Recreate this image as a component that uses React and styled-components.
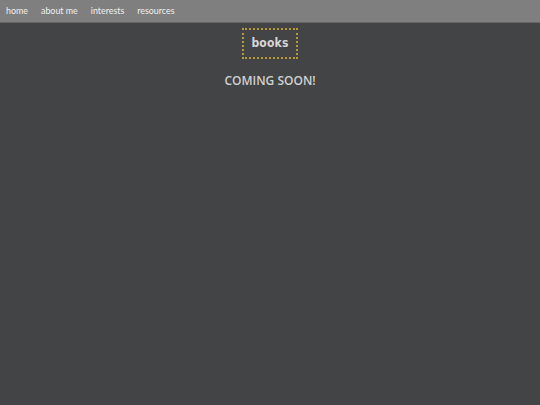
import React from "react";
import styled, { createGlobalStyle } from "styled-components";

const GlobalStyle = createGlobalStyle`
  html, body {
    margin: 0;
    height: 100%;
    background: #434445;
    font-family: "Lato", "Liberation Sans", sans-serif;
  }
`;

const Page = styled.div`
  min-height: 405px;
  display: flex;
  flex-direction: column;
  align-items: center;
`;

const Nav = styled.nav`
  align-self: stretch;
  height: 23px;
  box-sizing: border-box;
  padding: 0 6px 1px;
  display: flex;
  align-items: center;
  gap: 13px;
  background: #7f7f7f;
  border-bottom: 1px solid #666;
`;

const NavLink = styled.a`
  color: #f0f0f0;
  font-size: 8.9px;
  text-decoration: none;
`;

const TitleBox = styled.div`
  margin-top: 5px;
  width: 56px;
  height: 31px;
  box-sizing: border-box;
  padding-bottom: 1px;
  display: flex;
  align-items: center;
  justify-content: center;
  border: 2px dotted #b89a38;
`;

const Title = styled.h1`
  margin: 0;
  color: #d6d6d6;
  font-family: "DejaVu Sans Condensed", "DejaVu Sans", sans-serif;
  font-size: 12px;
  font-weight: 600;
  letter-spacing: 0.2px;
`;

const Message = styled.h2`
  margin: 14px 0 0;
  color: #d0d0d0;
  font-family: "Open Sans", sans-serif;
  font-size: 12px;
  font-weight: 600;
  line-height: 16px;
`;

const links = ["home", "about me", "interests", "resources"];

export default function App() {
  return (
    <Page>
      <GlobalStyle />
      <Nav>
        {links.map((link) => (
          <NavLink href="#" key={link}>{link}</NavLink>
        ))}
      </Nav>
      <TitleBox>
        <Title>books</Title>
      </TitleBox>
      <Message>COMING SOON!</Message>
    </Page>
  );
}
